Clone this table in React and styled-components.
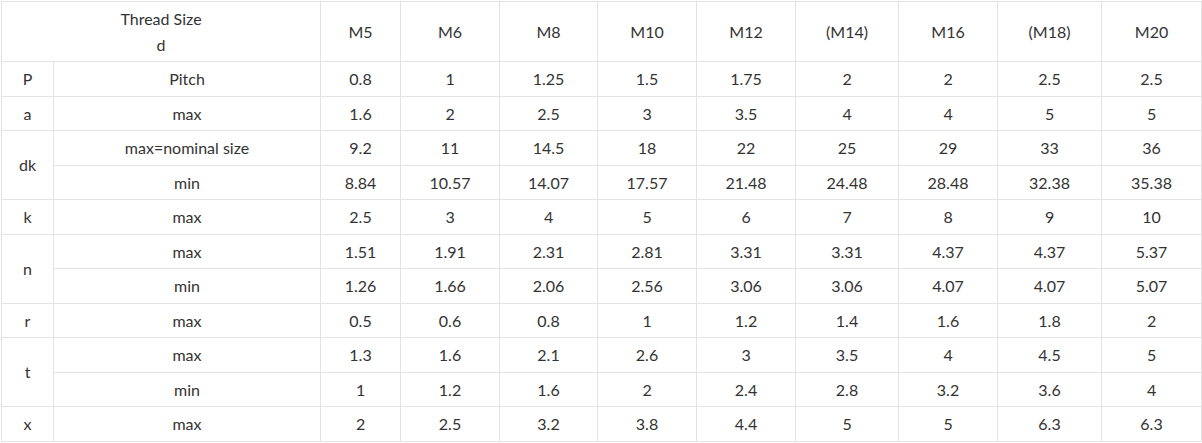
import React from 'react'
import styled, { createGlobalStyle } from 'styled-components'

const GlobalStyle = createGlobalStyle`
  body {
    margin: 0;
    background: #ffffff;
  }
`

const Wrap = styled.div`
  padding: 1px;
  background: #fff;
`

const Table = styled.table`
  border-collapse: collapse;
  table-layout: fixed;
  width: 1200px;
  font: 400 16px 'Lato', 'Liberation Sans', sans-serif;
  color: #333;
`

const Cell = styled.td`
  border: 1px solid #e3e3e3;
  text-align: center;
  vertical-align: middle;
  padding: 4px 6px;
  line-height: 25.5px;
  white-space: nowrap;
`

const HeadCell = styled(Cell)`
  height: ${({ tall }) => (tall ? '51px' : 'auto')};
`

const cols = [52, 267, 80, 99, 98, 99, 99, 103, 99, 104, 100]

const sizes = ['M5', 'M6', 'M8', 'M10', 'M12', '(M14)', 'M16', '(M18)', 'M20']

const rows = [
  { sym: 'P', label: 'Pitch', vals: ['0.8', '1', '1.25', '1.5', '1.75', '2', '2', '2.5', '2.5'] },
  { sym: 'a', label: 'max', vals: ['1.6', '2', '2.5', '3', '3.5', '4', '4', '5', '5'] },
  { sym: 'dk', span: 2, label: 'max=nominal size', vals: ['9.2', '11', '14.5', '18', '22', '25', '29', '33', '36'] },
  { label: 'min', vals: ['8.84', '10.57', '14.07', '17.57', '21.48', '24.48', '28.48', '32.38', '35.38'] },
  { sym: 'k', label: 'max', vals: ['2.5', '3', '4', '5', '6', '7', '8', '9', '10'] },
  { sym: 'n', span: 2, label: 'max', vals: ['1.51', '1.91', '2.31', '2.81', '3.31', '3.31', '4.37', '4.37', '5.37'] },
  { label: 'min', vals: ['1.26', '1.66', '2.06', '2.56', '3.06', '3.06', '4.07', '4.07', '5.07'] },
  { sym: 'r', label: 'max', vals: ['0.5', '0.6', '0.8', '1', '1.2', '1.4', '1.6', '1.8', '2'] },
  { sym: 't', span: 2, label: 'max', vals: ['1.3', '1.6', '2.1', '2.6', '3', '3.5', '4', '4.5', '5'] },
  { label: 'min', vals: ['1', '1.2', '1.6', '2', '2.4', '2.8', '3.2', '3.6', '4'] },
  { sym: 'x', label: 'max', vals: ['2', '2.5', '3.2', '3.8', '4.4', '5', '5', '6.3', '6.3'] },
]

export default function App() {
  return (
    <Wrap>
      <GlobalStyle />
      <Table>
        <colgroup>
          {cols.map((w, i) => (
            <col key={i} style={{ width: w }} />
          ))}
        </colgroup>
        <tbody>
          <tr>
            <HeadCell colSpan={2} tall>
              Thread Size
              <br />d
            </HeadCell>
            {sizes.map((s) => (
              <HeadCell key={s}>{s}</HeadCell>
            ))}
          </tr>
          {rows.map((r, i) => (
            <tr key={i}>
              {r.sym && <Cell rowSpan={r.span || 1}>{r.sym}</Cell>}
              <Cell>{r.label}</Cell>
              {r.vals.map((v, j) => (
                <Cell key={j}>{v}</Cell>
              ))}
            </tr>
          ))}
        </tbody>
      </Table>
    </Wrap>
  )
}
